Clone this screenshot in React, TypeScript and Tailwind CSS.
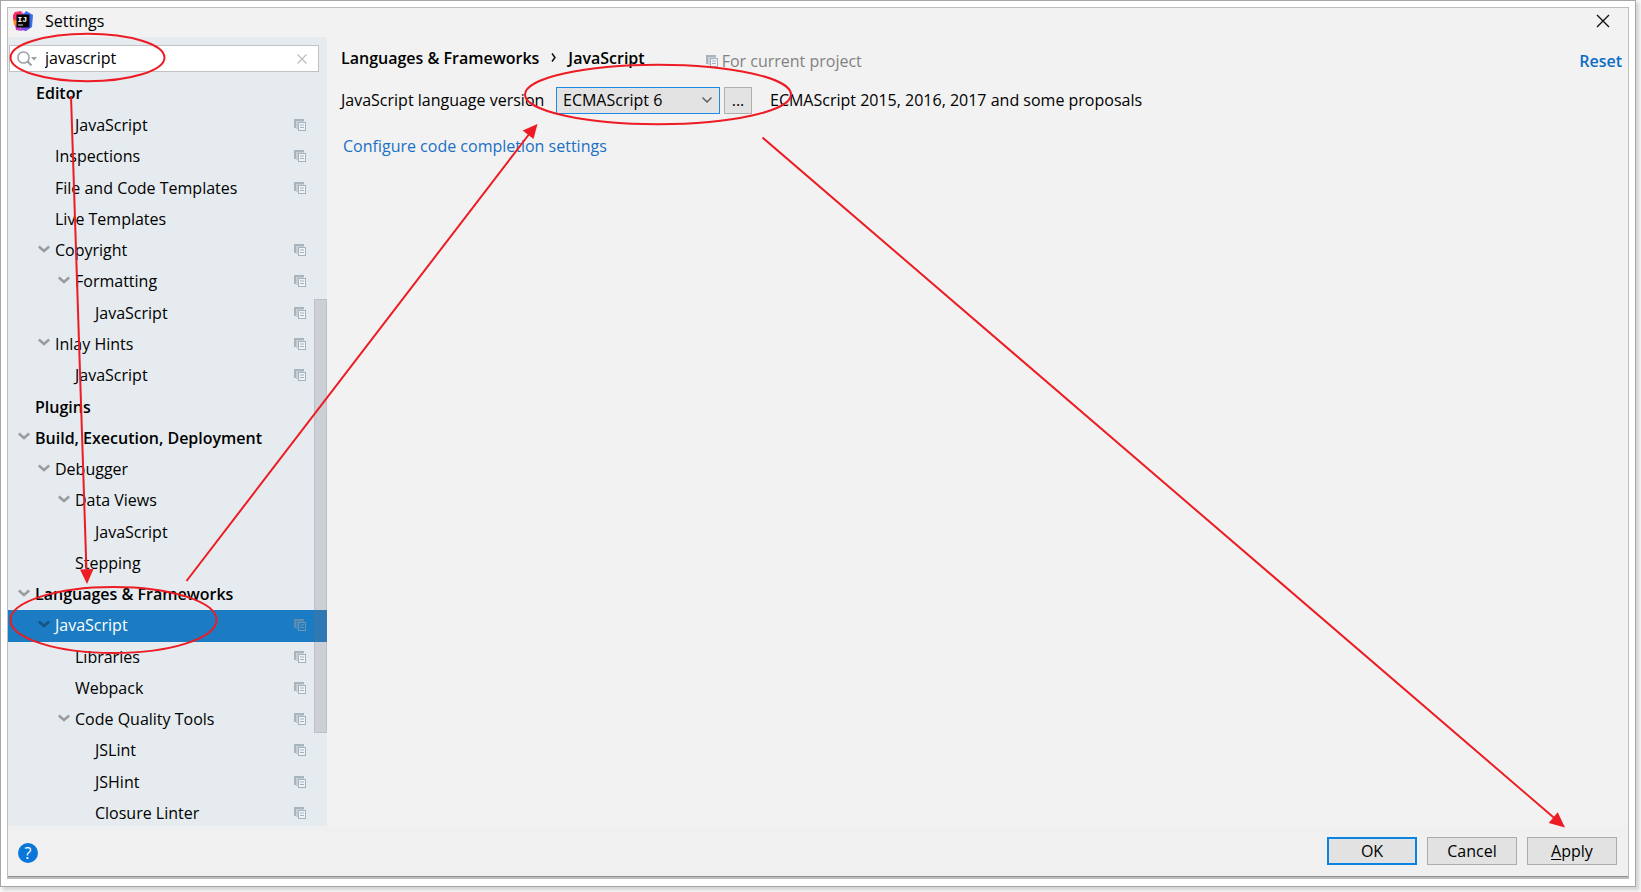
import { useState } from "react";

type Row = {
  label: string;
  depth: number;
  open?: boolean;
  bold?: boolean;
  project?: boolean;
  selected?: boolean;
};

const rows: Row[] = [
  { label: "JavaScript", depth: 2, project: true },
  { label: "Inspections", depth: 1, project: true },
  { label: "File and Code Templates", depth: 1, project: true },
  { label: "Live Templates", depth: 1 },
  { label: "Copyright", depth: 1, open: true, project: true },
  { label: "Formatting", depth: 2, open: true, project: true },
  { label: "JavaScript", depth: 3, project: true },
  { label: "Inlay Hints", depth: 1, open: true, project: true },
  { label: "JavaScript", depth: 2, project: true },
  { label: "Plugins", depth: 0, bold: true },
  { label: "Build, Execution, Deployment", depth: 0, open: true, bold: true },
  { label: "Debugger", depth: 1, open: true },
  { label: "Data Views", depth: 2, open: true },
  { label: "JavaScript", depth: 3 },
  { label: "Stepping", depth: 2 },
  { label: "Languages & Frameworks", depth: 0, open: true, bold: true },
  { label: "JavaScript", depth: 1, open: true, project: true, selected: true },
  { label: "Libraries", depth: 2, project: true },
  { label: "Webpack", depth: 2, project: true },
  { label: "Code Quality Tools", depth: 2, open: true, project: true },
  { label: "JSLint", depth: 3, project: true },
  { label: "JSHint", depth: 3, project: true },
  { label: "Closure Linter", depth: 3, project: true },
];

const indents = ["pl-[10px]", "pl-[30px]", "pl-[50px]", "pl-[70px]"];

function ProjectIcon({ dim = false }: { dim?: boolean }) {
  return (
    <svg width="12" height="12" viewBox="0 0 12 12" className="shrink-0" aria-hidden="true">
      <path d="M0 0H10V2H2V9H0Z" fill={dim ? "#5f8cae" : "#a9b5be"} />
      <path d="M2 2H10V3H4V10H2Z" fill={dim ? "#3f84b8" : "#c8d0d7"} />
      <rect x="4.5" y="3.5" width="7" height="8" fill={dim ? "#1b7cc3" : "#f0f4f6"} stroke={dim ? "#6f97b4" : "#a5b1bb"} />
      <path d="M6 6H10M6 8.5H10" stroke={dim ? "#6f97b4" : "#a5b1bb"} strokeWidth="1.2" />
    </svg>
  );
}

function Expander({ dark }: { dark?: boolean }) {
  return (
    <svg width="12" height="8" viewBox="0 0 12 8" className="-mt-[3px]" aria-hidden="true">
      <path d="M0.8 1.5L6 6L11.2 1.5" fill="none" stroke={dark ? "#17547f" : "#999da0"} strokeWidth="2.6" />
    </svg>
  );
}

function Logo() {
  return (
    <svg width="20" height="20" viewBox="0 0 20 20" aria-hidden="true">
      <path d="M0 4L2 1L8 0L9 5L4 12L0 9Z" fill="#fb2f63" />
      <path d="M0 8L4 10L4 15L1 14Z" fill="#fc8a1e" />
      <path d="M2 14L6 14L9 20L3 19Z" fill="#c63cc0" />
      <path d="M8 0L12 4L9 6Z" fill="#b14be0" />
      <path d="M13 0L20 4L19 16L13 20L8 18L10 4Z" fill="#3a6cf0" />
      <path d="M8 16H17L13 20L8 19Z" fill="#7a4fe8" />
      <rect x="3.5" y="3.5" width="13" height="13" fill="#050505" />
      <text x="4.5" y="10.5" fontFamily="Liberation Mono, monospace" fontWeight="700" fontSize="8" fill="#fff">IJ</text>
      <rect x="5" y="13.5" width="5" height="1" fill="#ddd" />
    </svg>
  );
}

function TitleBar() {
  return (
    <header className="flex h-[29px] shrink-0 items-center justify-between bg-[#f2f2f2] pr-[18px] pb-1 pl-[5px]">
      <div className="flex items-center gap-3">
        <Logo />
        <h1>Settings</h1>
      </div>
      <button type="button" aria-label="Close">
        <svg width="14" height="14" viewBox="0 0 14 14" aria-hidden="true">
          <path d="M1 1L13 13M13 1L1 13" stroke="#111" strokeWidth="1.4" />
        </svg>
      </button>
    </header>
  );
}

function Sidebar() {
  const [query, setQuery] = useState("javascript");
  return (
    <aside className="relative flex min-h-0 w-[319px] shrink-0 flex-col overflow-hidden bg-[#e6ebef] pt-2">
      <div className="mr-2 ml-[1px] flex h-[27px] shrink-0 items-center border border-[#bfc1c3] bg-white pr-[11px] pl-[7px]">
        <svg width="20" height="16" viewBox="0 0 20 16" className="shrink-0" aria-hidden="true">
          <circle cx="6.5" cy="6.5" r="5.6" fill="none" stroke="#9a9fa4" strokeWidth="1.5" />
          <path d="M10.5 10.5L14.5 14.5" stroke="#9a9fa4" strokeWidth="2" />
          <path d="M14 6H20L17 9.5Z" fill="#9a9fa4" />
        </svg>
        <input
          aria-label="Search settings"
          className="ml-2 min-w-0 flex-1 bg-transparent pb-[2px] outline-none"
          value={query}
          onChange={(e) => setQuery(e.target.value)}
        />
        <button type="button" aria-label="Clear search" onClick={() => setQuery("")}>
          <svg width="10" height="10" viewBox="0 0 10 10" aria-hidden="true">
            <path d="M0.5 0.5L9.5 9.5M9.5 0.5L0.5 9.5" stroke="#bcbfc2" strokeWidth="1.3" />
          </svg>
        </button>
      </div>
      <h2 className="flex h-[38px] shrink-0 items-center pt-1 pl-[28px] font-semibold">Editor</h2>
      <ul className="-mb-[3px] flex min-h-0 flex-1 flex-col">
        {rows.map((row, i) => (
          <li
            key={i}
            className={`flex min-h-0 flex-1 items-center pr-[21px] pb-[1px] ${indents[row.depth]} ${
              row.selected ? "bg-[#1b7cc3] text-white" : ""
            } ${row.bold ? "font-semibold" : ""}`}
          >
            <span className="w-[17px] shrink-0">{row.open && <Expander dark={row.selected} />}</span>
            <span className="flex-1 whitespace-nowrap">{row.label}</span>
            {row.project && <ProjectIcon dim={row.selected} />}
          </li>
        ))}
      </ul>
      <div className="absolute top-[30%] right-0 h-[55%] w-[13px] translate-y-[25px] border border-[#736e7d28] bg-[#736e7d38]" />
    </aside>
  );
}

function LanguagePanel() {
  return (
    <main className="min-w-0 flex-1 bg-[#f2f2f2] pt-[9px] pr-[6px] pl-[14px]">
      <div className="flex h-6 items-center">
        <nav aria-label="Breadcrumb" className="flex items-center font-semibold whitespace-nowrap">
          <span>Languages &amp; Frameworks</span>
          <svg width="5" height="9" viewBox="0 0 5 9" className="mx-3 mb-[2px]" aria-hidden="true">
            <path d="M1 0.5L4 4.5L1 8.5" fill="none" stroke="#111" strokeWidth="1.5" />
          </svg>
          <span>JavaScript</span>
        </nav>
        <p className="mt-[6px] ml-[61px] flex items-center gap-1 whitespace-nowrap text-[#828282]">
          <ProjectIcon />
          For current project
        </p>
        <a href="#reset" className="mt-[6px] ml-auto font-semibold text-[#0a6cc4]">Reset</a>
      </div>
      <div className="mt-4 flex h-7 items-center whitespace-nowrap">
        <label htmlFor="version" className="w-[215px] shrink-0">JavaScript language version</label>
        <div className="grid w-[164px] shrink-0 items-center">
          <select
            id="version"
            className="col-start-1 row-start-1 h-[27px] w-full appearance-none border border-[#1c8be6] bg-[#e3e3e3] pl-[6px] outline-none"
          >
            <option>ECMAScript 6</option>
          </select>
          <svg width="10" height="6" viewBox="0 0 10 6" className="pointer-events-none col-start-1 row-start-1 mr-2 justify-self-end" aria-hidden="true">
            <path d="M0.5 0.5L5 5L9.5 0.5" fill="none" stroke="#555" strokeWidth="1.3" />
          </svg>
        </div>
        <button type="button" aria-label="Configure language versions" className="ml-1 h-[27px] w-7 shrink-0 border border-[#b0b0b0] bg-[#e3e3e3]">
          ...
        </button>
        <span className="ml-[18px]">ECMAScript 2015, 2016, 2017 and some proposals</span>
      </div>
      <a href="#completion" className="mt-5 ml-[2px] inline-block text-[#1a70c6]">Configure code completion settings</a>
    </main>
  );
}

function Footer() {
  return (
    <footer className="flex h-[51px] shrink-0 items-center justify-between border-b border-[#8e8e8e] bg-[#f0f0f0] pr-[11px] pl-[10px]">
      <button type="button" aria-label="Help" className="mt-1 h-5 w-5 rounded-full bg-[#0a76da] leading-5 text-white">
        ?
      </button>
      <div className="flex gap-[10px]">
        <button type="button" className="h-7 w-[90px] border-2 border-[#0a84e0] bg-[#e2e2e2]">OK</button>
        <button type="button" className="h-7 w-[90px] border border-[#adadad] bg-[#e2e2e2]">Cancel</button>
        <button type="button" className="h-7 w-[90px] border border-[#adadad] bg-[#e2e2e2]">
          <span className="underline underline-offset-2">A</span>pply
        </button>
      </div>
    </footer>
  );
}

function Annotations() {
  return (
    <svg className="pointer-events-none absolute top-0 left-0 h-full w-full" aria-hidden="true">
      <g fill="none" stroke="#ed1c24" strokeWidth="2">
        <ellipse cx="87.5" cy="57.5" rx="77" ry="23.8" />
        <ellipse cx="113.5" cy="620" rx="103" ry="33" />
        <ellipse cx="658" cy="94.5" rx="133" ry="29.8" />
        <path d="M71 96L86.5 572M186.5 581L530 133M762.5 137.5L1556 819.5" />
      </g>
      <g fill="#ed1c24">
        <path d="M87 584L80 569.5L93.5 569Z" />
        <path d="M537.5 124L522.7 130.5L533.5 139Z" />
        <path d="M1565 827.5L1557.7 812.3L1548.7 823Z" />
      </g>
    </svg>
  );
}

export default function App() {
  return (
    <div className="relative flex h-screen w-full flex-col bg-[#f6f6f6] pr-[5px] pb-[5px] font-['Open_Sans','Noto_Sans',sans-serif] text-[16px] leading-6 text-black">
      <div className="flex min-h-0 flex-1 flex-col border border-[#a6a6a6] bg-white p-[6px] pb-[7px] shadow-[3px_3px_3px_#d4d4d4]">
        <div className="flex min-h-0 flex-1 flex-col border border-b-2 border-[#bdbdbd]">
          <TitleBar />
          <div className="flex min-h-0 flex-1">
            <Sidebar />
            <LanguagePanel />
          </div>
          <Footer />
        </div>
      </div>
      <Annotations />
    </div>
  );
}
